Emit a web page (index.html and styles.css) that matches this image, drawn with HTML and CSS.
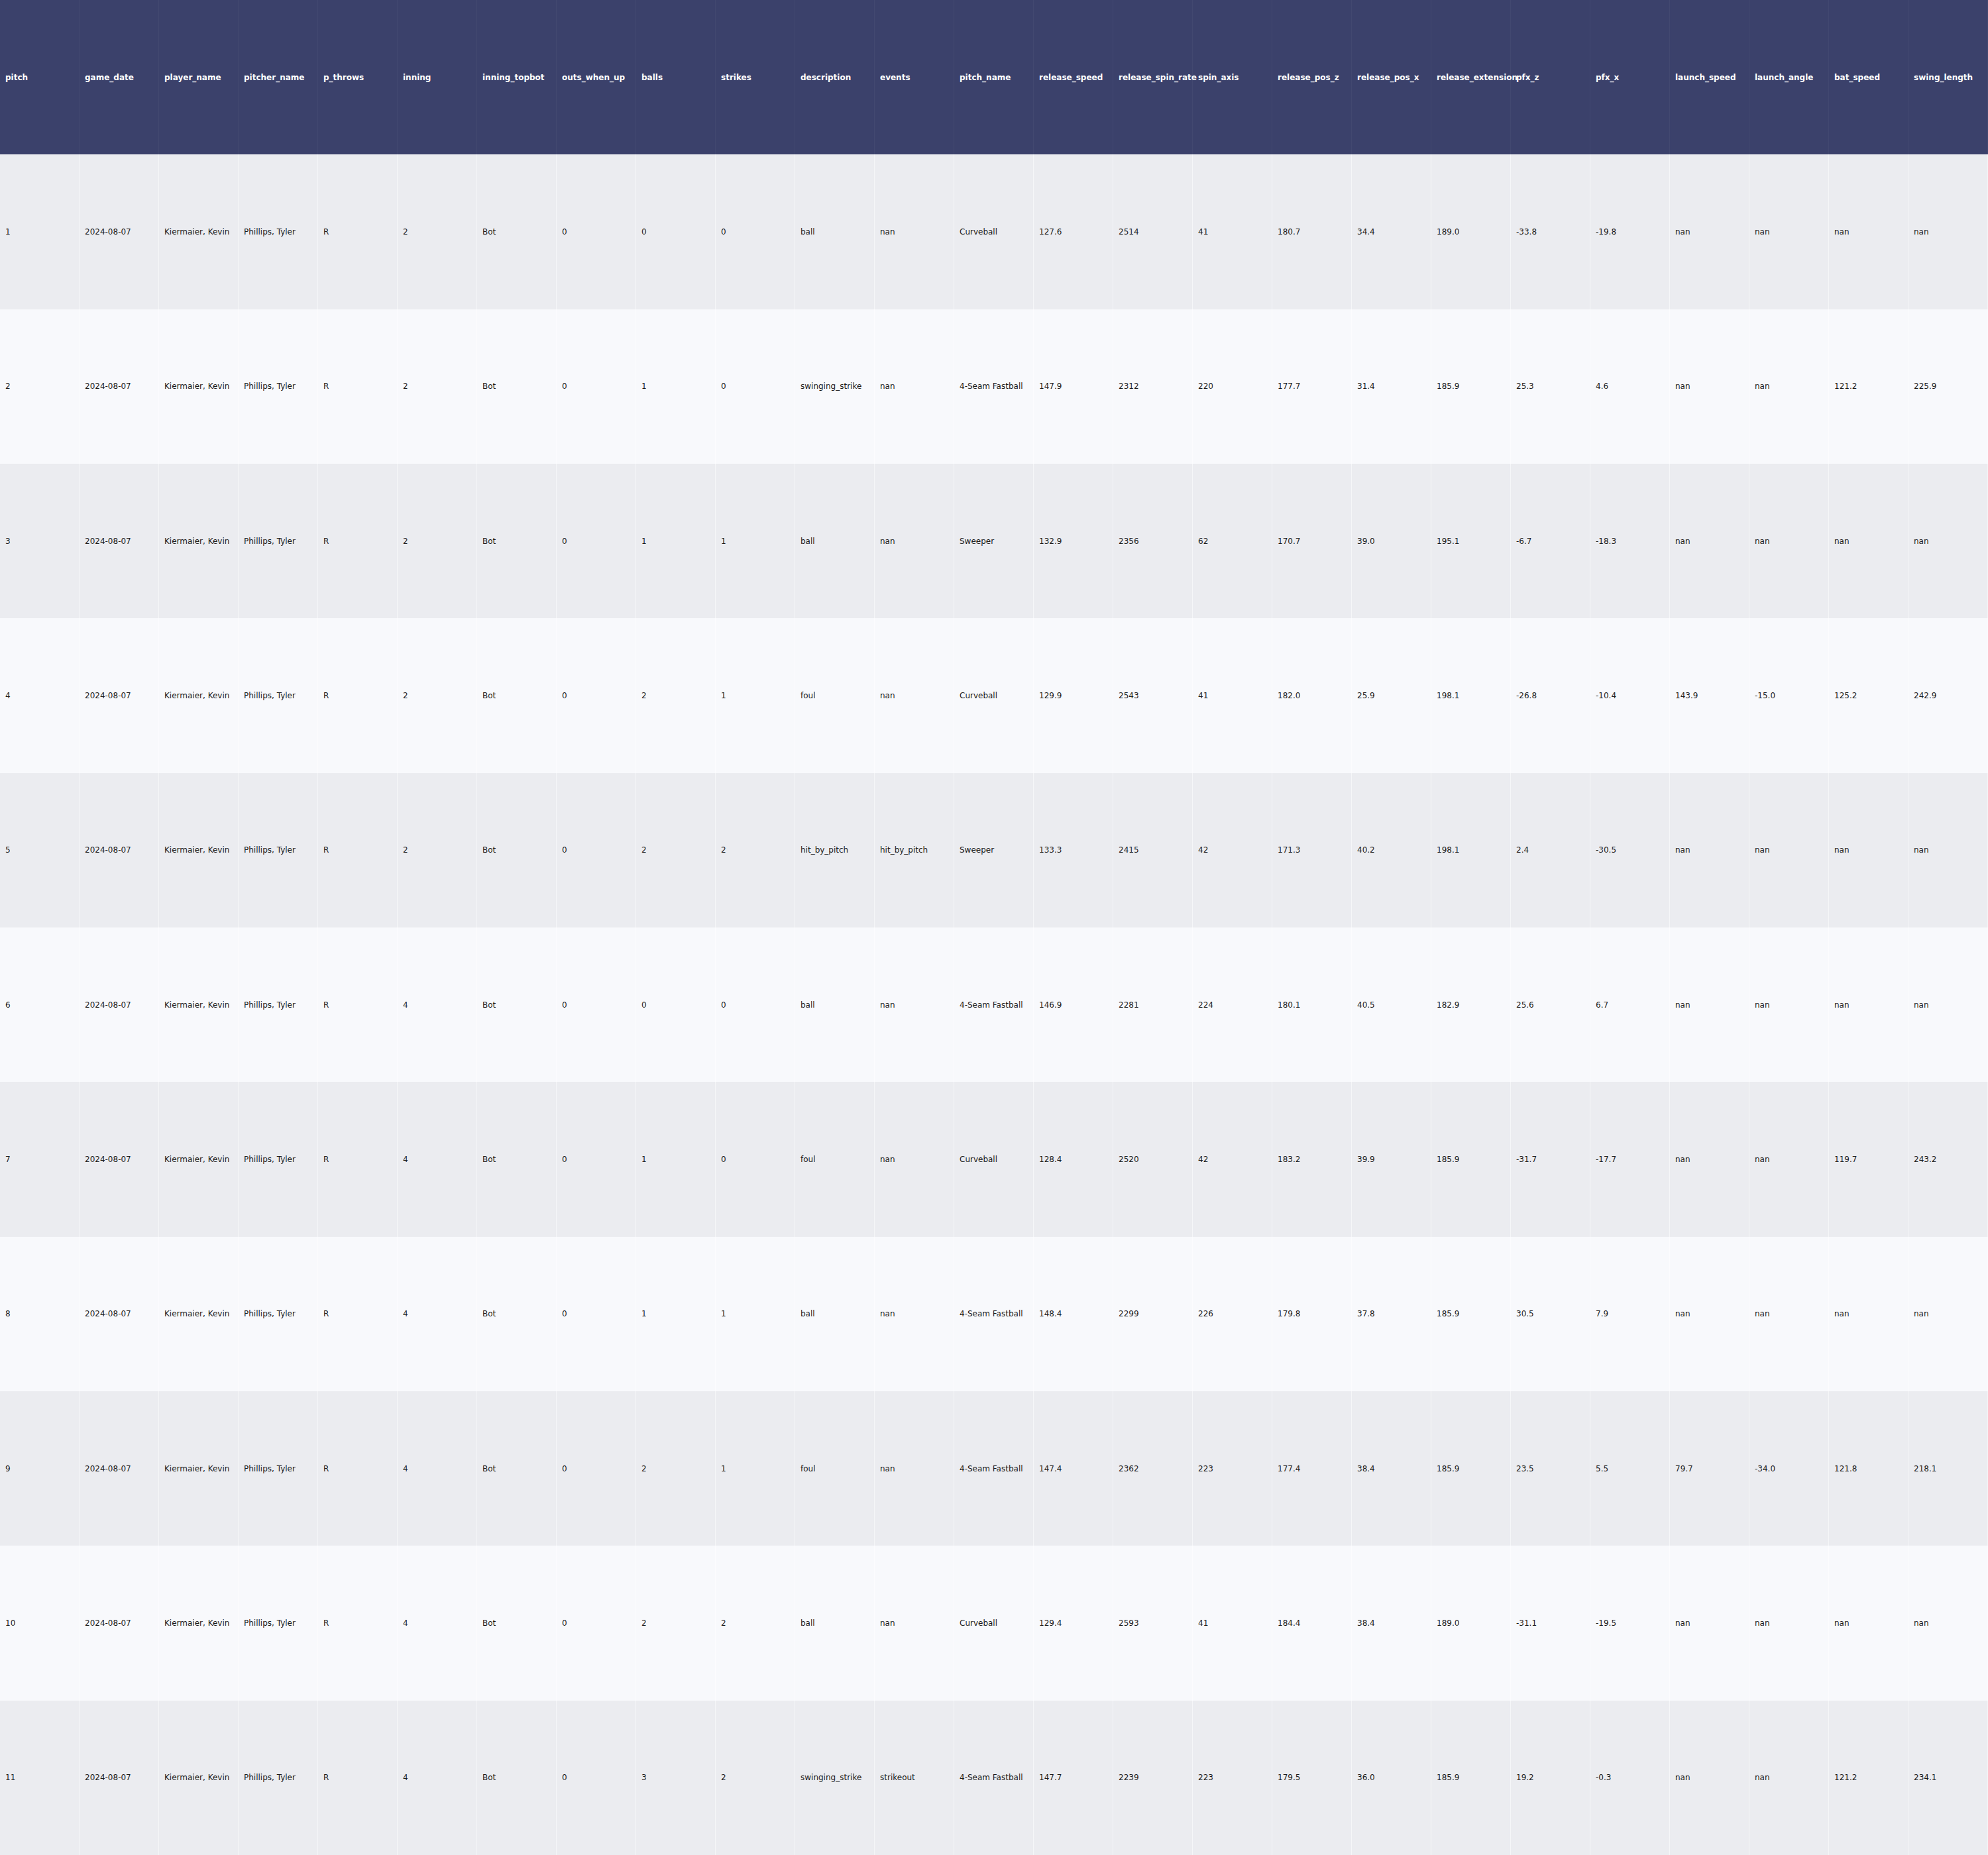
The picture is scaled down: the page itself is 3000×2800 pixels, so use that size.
FILE: index.html
```html
<!DOCTYPE html>
<html>
<head>
<meta charset="utf-8">
<title>Pitch table</title>
<link rel="stylesheet" href="styles.css">
</head>
<body>
<div class="table">
  <div class="row head">
    <div class="cell">pitch</div><div class="cell">game_date</div><div class="cell">player_name</div><div class="cell">pitcher_name</div><div class="cell">p_throws</div><div class="cell">inning</div><div class="cell">inning_topbot</div><div class="cell">outs_when_up</div><div class="cell">balls</div><div class="cell">strikes</div><div class="cell">description</div><div class="cell">events</div><div class="cell">pitch_name</div><div class="cell">release_speed</div><div class="cell">release_spin_rate</div><div class="cell">spin_axis</div><div class="cell">release_pos_z</div><div class="cell">release_pos_x</div><div class="cell">release_extension</div><div class="cell">pfx_z</div><div class="cell">pfx_x</div><div class="cell">launch_speed</div><div class="cell">launch_angle</div><div class="cell">bat_speed</div><div class="cell">swing_length</div>
  </div>
  <div class="row odd">
    <div class="cell">1</div><div class="cell">2024-08-07</div><div class="cell">Kiermaier, Kevin</div><div class="cell">Phillips, Tyler</div><div class="cell">R</div><div class="cell">2</div><div class="cell">Bot</div><div class="cell">0</div><div class="cell">0</div><div class="cell">0</div><div class="cell">ball</div><div class="cell">nan</div><div class="cell">Curveball</div><div class="cell">127.6</div><div class="cell">2514</div><div class="cell">41</div><div class="cell">180.7</div><div class="cell">34.4</div><div class="cell">189.0</div><div class="cell">-33.8</div><div class="cell">-19.8</div><div class="cell">nan</div><div class="cell">nan</div><div class="cell">nan</div><div class="cell">nan</div>
  </div>
  <div class="row even">
    <div class="cell">2</div><div class="cell">2024-08-07</div><div class="cell">Kiermaier, Kevin</div><div class="cell">Phillips, Tyler</div><div class="cell">R</div><div class="cell">2</div><div class="cell">Bot</div><div class="cell">0</div><div class="cell">1</div><div class="cell">0</div><div class="cell">swinging_strike</div><div class="cell">nan</div><div class="cell">4-Seam Fastball</div><div class="cell">147.9</div><div class="cell">2312</div><div class="cell">220</div><div class="cell">177.7</div><div class="cell">31.4</div><div class="cell">185.9</div><div class="cell">25.3</div><div class="cell">4.6</div><div class="cell">nan</div><div class="cell">nan</div><div class="cell">121.2</div><div class="cell">225.9</div>
  </div>
  <div class="row odd">
    <div class="cell">3</div><div class="cell">2024-08-07</div><div class="cell">Kiermaier, Kevin</div><div class="cell">Phillips, Tyler</div><div class="cell">R</div><div class="cell">2</div><div class="cell">Bot</div><div class="cell">0</div><div class="cell">1</div><div class="cell">1</div><div class="cell">ball</div><div class="cell">nan</div><div class="cell">Sweeper</div><div class="cell">132.9</div><div class="cell">2356</div><div class="cell">62</div><div class="cell">170.7</div><div class="cell">39.0</div><div class="cell">195.1</div><div class="cell">-6.7</div><div class="cell">-18.3</div><div class="cell">nan</div><div class="cell">nan</div><div class="cell">nan</div><div class="cell">nan</div>
  </div>
  <div class="row even">
    <div class="cell">4</div><div class="cell">2024-08-07</div><div class="cell">Kiermaier, Kevin</div><div class="cell">Phillips, Tyler</div><div class="cell">R</div><div class="cell">2</div><div class="cell">Bot</div><div class="cell">0</div><div class="cell">2</div><div class="cell">1</div><div class="cell">foul</div><div class="cell">nan</div><div class="cell">Curveball</div><div class="cell">129.9</div><div class="cell">2543</div><div class="cell">41</div><div class="cell">182.0</div><div class="cell">25.9</div><div class="cell">198.1</div><div class="cell">-26.8</div><div class="cell">-10.4</div><div class="cell">143.9</div><div class="cell">-15.0</div><div class="cell">125.2</div><div class="cell">242.9</div>
  </div>
  <div class="row odd">
    <div class="cell">5</div><div class="cell">2024-08-07</div><div class="cell">Kiermaier, Kevin</div><div class="cell">Phillips, Tyler</div><div class="cell">R</div><div class="cell">2</div><div class="cell">Bot</div><div class="cell">0</div><div class="cell">2</div><div class="cell">2</div><div class="cell">hit_by_pitch</div><div class="cell">hit_by_pitch</div><div class="cell">Sweeper</div><div class="cell">133.3</div><div class="cell">2415</div><div class="cell">42</div><div class="cell">171.3</div><div class="cell">40.2</div><div class="cell">198.1</div><div class="cell">2.4</div><div class="cell">-30.5</div><div class="cell">nan</div><div class="cell">nan</div><div class="cell">nan</div><div class="cell">nan</div>
  </div>
  <div class="row even">
    <div class="cell">6</div><div class="cell">2024-08-07</div><div class="cell">Kiermaier, Kevin</div><div class="cell">Phillips, Tyler</div><div class="cell">R</div><div class="cell">4</div><div class="cell">Bot</div><div class="cell">0</div><div class="cell">0</div><div class="cell">0</div><div class="cell">ball</div><div class="cell">nan</div><div class="cell">4-Seam Fastball</div><div class="cell">146.9</div><div class="cell">2281</div><div class="cell">224</div><div class="cell">180.1</div><div class="cell">40.5</div><div class="cell">182.9</div><div class="cell">25.6</div><div class="cell">6.7</div><div class="cell">nan</div><div class="cell">nan</div><div class="cell">nan</div><div class="cell">nan</div>
  </div>
  <div class="row odd">
    <div class="cell">7</div><div class="cell">2024-08-07</div><div class="cell">Kiermaier, Kevin</div><div class="cell">Phillips, Tyler</div><div class="cell">R</div><div class="cell">4</div><div class="cell">Bot</div><div class="cell">0</div><div class="cell">1</div><div class="cell">0</div><div class="cell">foul</div><div class="cell">nan</div><div class="cell">Curveball</div><div class="cell">128.4</div><div class="cell">2520</div><div class="cell">42</div><div class="cell">183.2</div><div class="cell">39.9</div><div class="cell">185.9</div><div class="cell">-31.7</div><div class="cell">-17.7</div><div class="cell">nan</div><div class="cell">nan</div><div class="cell">119.7</div><div class="cell">243.2</div>
  </div>
  <div class="row even">
    <div class="cell">8</div><div class="cell">2024-08-07</div><div class="cell">Kiermaier, Kevin</div><div class="cell">Phillips, Tyler</div><div class="cell">R</div><div class="cell">4</div><div class="cell">Bot</div><div class="cell">0</div><div class="cell">1</div><div class="cell">1</div><div class="cell">ball</div><div class="cell">nan</div><div class="cell">4-Seam Fastball</div><div class="cell">148.4</div><div class="cell">2299</div><div class="cell">226</div><div class="cell">179.8</div><div class="cell">37.8</div><div class="cell">185.9</div><div class="cell">30.5</div><div class="cell">7.9</div><div class="cell">nan</div><div class="cell">nan</div><div class="cell">nan</div><div class="cell">nan</div>
  </div>
  <div class="row odd">
    <div class="cell">9</div><div class="cell">2024-08-07</div><div class="cell">Kiermaier, Kevin</div><div class="cell">Phillips, Tyler</div><div class="cell">R</div><div class="cell">4</div><div class="cell">Bot</div><div class="cell">0</div><div class="cell">2</div><div class="cell">1</div><div class="cell">foul</div><div class="cell">nan</div><div class="cell">4-Seam Fastball</div><div class="cell">147.4</div><div class="cell">2362</div><div class="cell">223</div><div class="cell">177.4</div><div class="cell">38.4</div><div class="cell">185.9</div><div class="cell">23.5</div><div class="cell">5.5</div><div class="cell">79.7</div><div class="cell">-34.0</div><div class="cell">121.8</div><div class="cell">218.1</div>
  </div>
  <div class="row even">
    <div class="cell">10</div><div class="cell">2024-08-07</div><div class="cell">Kiermaier, Kevin</div><div class="cell">Phillips, Tyler</div><div class="cell">R</div><div class="cell">4</div><div class="cell">Bot</div><div class="cell">0</div><div class="cell">2</div><div class="cell">2</div><div class="cell">ball</div><div class="cell">nan</div><div class="cell">Curveball</div><div class="cell">129.4</div><div class="cell">2593</div><div class="cell">41</div><div class="cell">184.4</div><div class="cell">38.4</div><div class="cell">189.0</div><div class="cell">-31.1</div><div class="cell">-19.5</div><div class="cell">nan</div><div class="cell">nan</div><div class="cell">nan</div><div class="cell">nan</div>
  </div>
  <div class="row odd">
    <div class="cell">11</div><div class="cell">2024-08-07</div><div class="cell">Kiermaier, Kevin</div><div class="cell">Phillips, Tyler</div><div class="cell">R</div><div class="cell">4</div><div class="cell">Bot</div><div class="cell">0</div><div class="cell">3</div><div class="cell">2</div><div class="cell">swinging_strike</div><div class="cell">strikeout</div><div class="cell">4-Seam Fastball</div><div class="cell">147.7</div><div class="cell">2239</div><div class="cell">223</div><div class="cell">179.5</div><div class="cell">36.0</div><div class="cell">185.9</div><div class="cell">19.2</div><div class="cell">-0.3</div><div class="cell">nan</div><div class="cell">nan</div><div class="cell">121.2</div><div class="cell">234.1</div>
  </div>
</div>
</body>
</html>
```

FILE: styles.css
```css
html, body {
  margin: 0;
  padding: 0;
  background: #f8f9fc;
}

.table {
  display: grid;
  grid-template-rows: repeat(12, 1fr);
  width: 3000px;
  height: 2800px;
  font-family: "DejaVu Sans", Verdana, sans-serif;
  font-size: 12px;
}

.row {
  display: grid;
  grid-template-columns: repeat(25, 120px);
}

.cell {
  display: flex;
  align-items: center;
  padding-left: 8px;
  overflow: visible;
  white-space: nowrap;
  border-right: 1px solid rgba(255, 255, 255, 0.5);
  min-width: 0;
}

.head {
  background: #3b416b;
  color: #ffffff;
  font-weight: bold;
}

.head .cell {
  border-right-color: rgba(255, 255, 255, 0.04);
}

.odd {
  background: #ebecf0;
  color: #1a1a1a;
}

.even {
  background: #f8f9fc;
  color: #1a1a1a;
}
```
